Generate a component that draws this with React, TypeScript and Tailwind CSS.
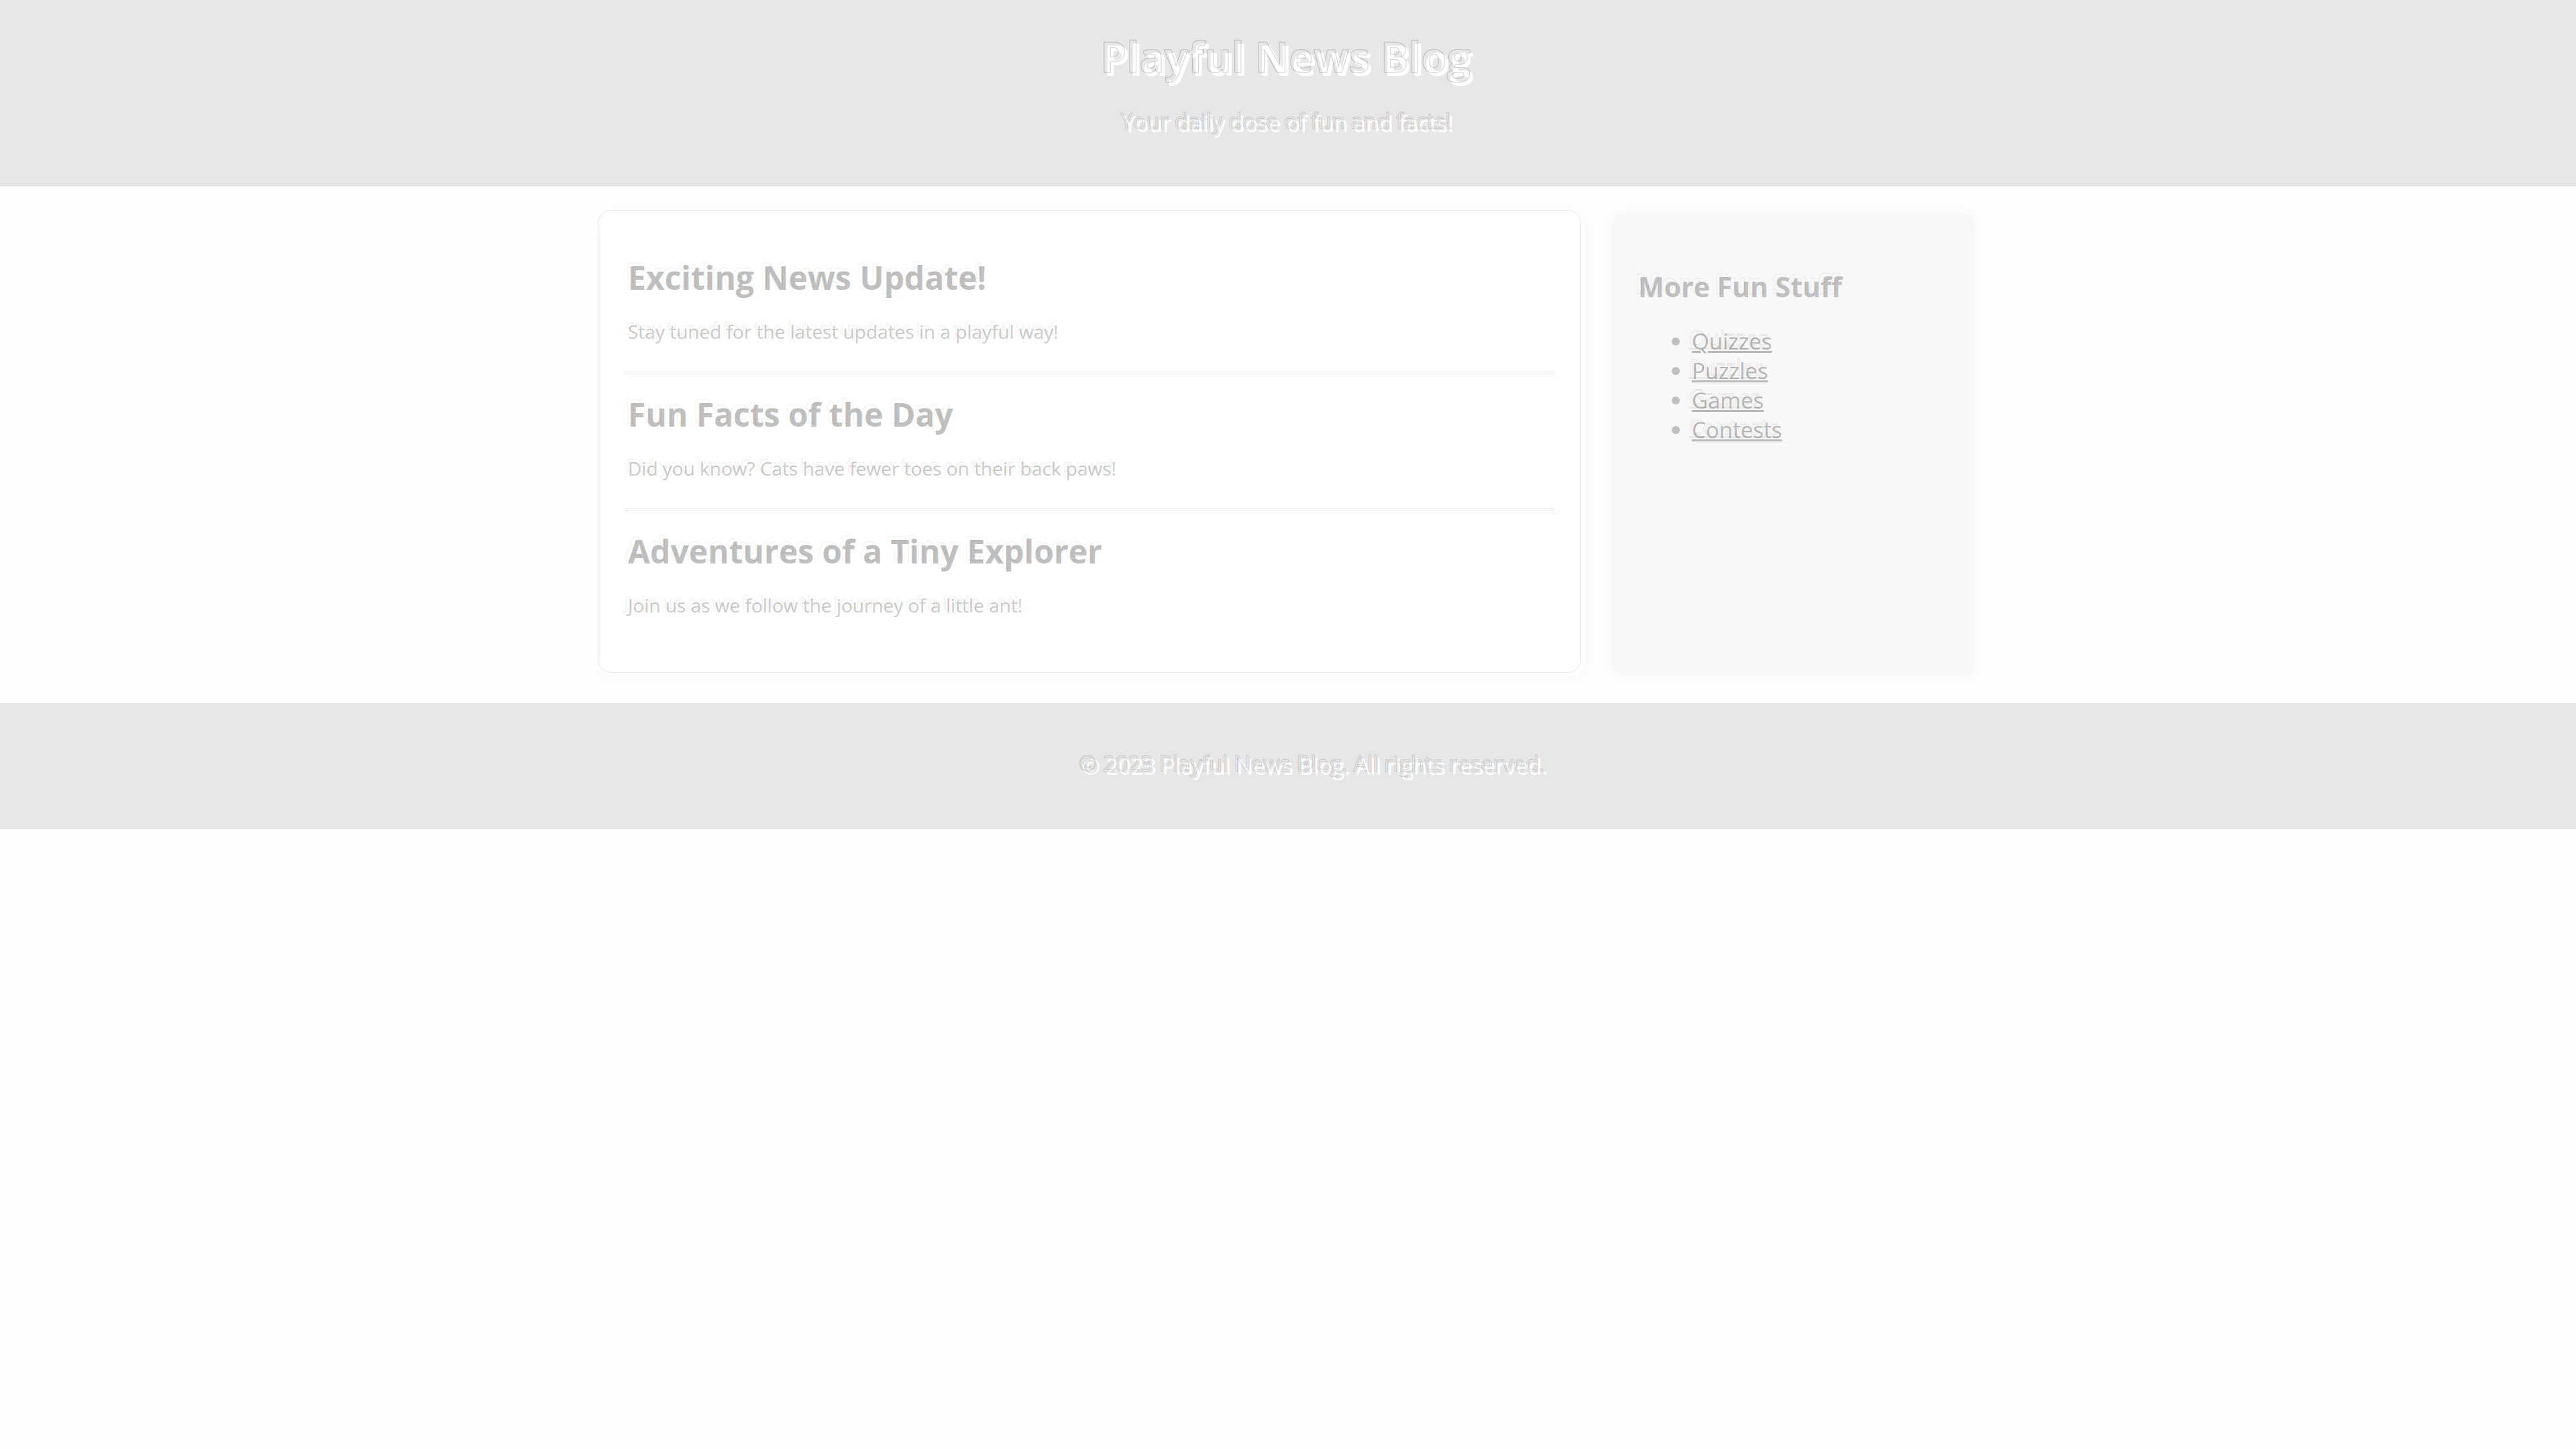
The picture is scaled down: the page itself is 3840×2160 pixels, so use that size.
type Post = { title: string; body: string };

const posts: Post[] = [
  { title: "Exciting News Update!", body: "Stay tuned for the latest updates in a playful way!" },
  { title: "Fun Facts of the Day", body: "Did you know? Cats have fewer toes on their back paws!" },
  { title: "Adventures of a Tiny Explorer", body: "Join us as we follow the journey of a little ant!" },
];

const links = ["Quizzes", "Puzzles", "Games", "Contests"];

/* Embossed lettering: a hairline outline with the solid letters cast 5px down and right. */
const embossTitle =
  "text-transparent [-webkit-text-stroke:1px_rgba(0,0,0,0.2)] [text-shadow:5px_5px_0_#ffffff]";
const embossWhite =
  "text-transparent [-webkit-text-stroke:1px_rgba(0,0,0,0.16)] [text-shadow:5px_5px_0_#ffffff]";
const embossGray =
  "text-transparent [-webkit-text-stroke:1px_rgba(0,0,0,0.08)] [text-shadow:5px_5px_0_#c0c0c0]";
const embossLight =
  "text-transparent [-webkit-text-stroke:1px_rgba(0,0,0,0.08)] [text-shadow:5px_5px_0_#cccccc]";

function Separator() {
  return (
    <div aria-hidden="true">
      <div className="h-1 border-y border-[#e6e6e6]" />
      <div className="mt-0.5 -mr-[5px] ml-[5px] h-0.5 bg-[#f9f9f9]" />
    </div>
  );
}

function Article({ post, last }: { post: Post; last: boolean }) {
  return (
    <article>
      <div className="pt-[17px] pb-9">
        <h2 className={`text-[48px] leading-[68px] font-bold ${embossGray}`}>{post.title}</h2>
        <p className={`mt-[26px] mb-[9px] text-[28px] leading-[40px] font-medium ${embossLight}`}>
          {post.body}
        </p>
      </div>
      {!last && <Separator />}
    </article>
  );
}

export default function App() {
  return (
    <div className="min-h-screen bg-[#fdfdfd] font-['Open_Sans',sans-serif]">
      <header className="bg-[#e7e7e7] pt-10 pr-2 pb-[76px] text-center">
        <h1 className={`text-[62px] leading-[88px] font-bold ${embossTitle}`}>Playful News Blog</h1>
        <p className={`mt-[30px] text-[33px] leading-[44px] font-medium ${embossWhite}`}>
          Your daily dose of fun and facts!
        </p>
      </header>

      <div className="mx-auto my-10 grid max-w-[2048px] grid-cols-[1466fr_542fr] gap-10">
        <main className="relative rounded-[20px] bg-white pt-10 pr-[45px] pb-[46px] pl-[35px] shadow-[0_0_20px_rgba(0,0,0,0.02)]">
          <div
            aria-hidden="true"
            className="pointer-events-none absolute -top-[5px] right-[5px] bottom-[5px] -left-[5px] rounded-[20px] border border-[#e6e6e6]"
          />
          {posts.map((post, i) => (
            <Article key={post.title} post={post} last={i === posts.length - 1} />
          ))}
        </main>

        <aside className="rounded-[20px] bg-[#f8f8f8] pt-[76px] pl-[35px] shadow-[0_0_20px_rgba(0,0,0,0.02)]">
          <h3 className={`text-[41px] leading-[56px] font-bold ${embossGray}`}>More Fun Stuff</h3>
          <ul className="mt-8 pl-[55px] text-[33px] leading-[44px] font-medium">
            {links.map((label) => (
              <li key={label} className="flex gap-[13px]">
                <span aria-hidden="true" className="mt-[21px] size-3 rounded-full bg-[#c0c0c0]" />
                <a
                  href="#"
                  className="text-transparent underline decoration-[3px] underline-offset-2 [-webkit-text-stroke:1px_rgba(0,0,0,0.06)] [text-shadow:5px_5px_0_#b8b8b8]"
                >
                  {label}
                </a>
              </li>
            ))}
          </ul>
        </aside>
      </div>

      <footer className="bg-[#e7e7e7] pt-[68px] pb-[76px] pl-[70px] text-center">
        <p className={`text-[33px] leading-[44px] font-medium ${embossWhite}`}>
          © 2023 Playful News Blog. All rights reserved.
        </p>
      </footer>
    </div>
  );
}
